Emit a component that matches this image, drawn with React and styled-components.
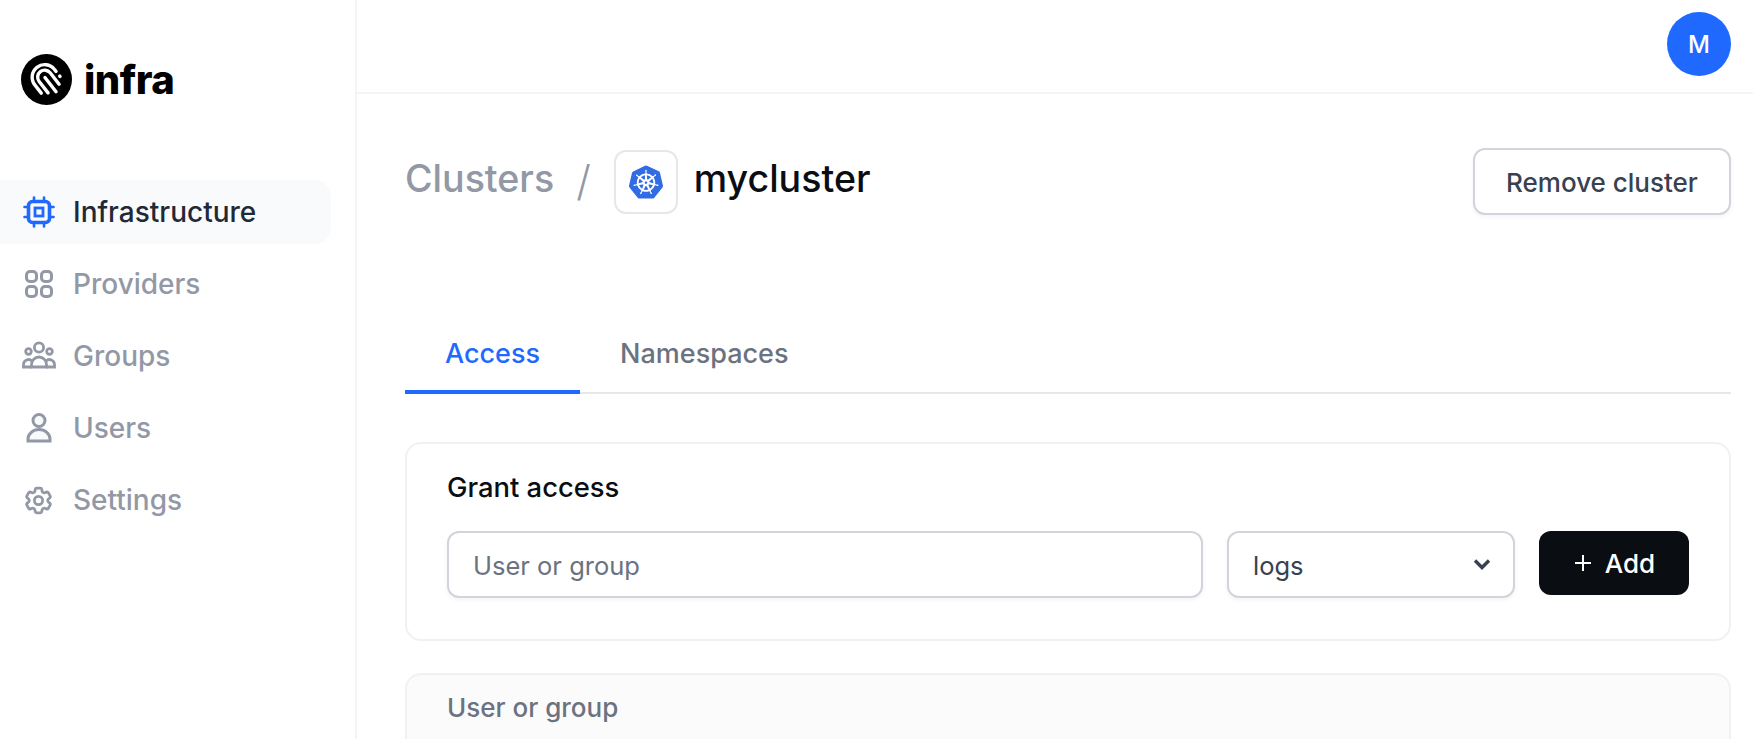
import styled, { createGlobalStyle } from 'styled-components'
import { HiOutlineCog6Tooth } from 'react-icons/hi2'
import { SiKubernetes } from 'react-icons/si'

const blue = '#1f69ff'
const ink = '#0a0e12'
const muted = '#9298a5'

const GlobalStyle = createGlobalStyle`
  html, body {
    margin: 0;
    height: 100%;
    background: #fff;
    font-family: Inter, 'Liberation Sans', sans-serif;
    overflow: hidden;
  }
  * { box-sizing: border-box; }
`

const Shell = styled.div`
  display: flex;
  height: 739px;
  overflow: hidden;
`

const Sidebar = styled.aside`
  flex: 0 0 357px;
  border-right: 2px solid #f3f4f6;
  padding: 54px 24px 0 0;
`

const Brand = styled.div`
  display: flex;
  align-items: center;
  gap: 12px;
  margin-left: 21px;
  height: 51px;
`

const Wordmark = styled.span`
  font-size: 40px;
  font-weight: 800;
  color: #000;
  letter-spacing: -0.5px;
  line-height: 1;
  margin-top: 1px;
`

const Menu = styled.nav`
  display: flex;
  flex-direction: column;
  gap: 8px;
  margin-top: 75px;
`

const MenuItem = styled.a`
  display: flex;
  align-items: center;
  gap: 18px;
  height: 64px;
  padding-left: 23px;
  border-radius: 0 16px 16px 0;
  font-size: 28px;
  font-weight: 450;
  color: ${p => (p.$active ? '#1f2937' : muted)};
  background: ${p => (p.$active ? '#f9fafb' : 'transparent')};
  svg {
    flex: none;
    color: ${p => (p.$active ? blue : muted)};
  }
`

const Main = styled.div`
  flex: 1;
  min-width: 0;
`

const TopBar = styled.header`
  display: flex;
  justify-content: flex-end;
  align-items: center;
  height: 94px;
  padding: 0 22px 4px 0;
  border-bottom: 2px solid #f3f4f6;
`

const Avatar = styled.div`
  width: 64px;
  height: 64px;
  border-radius: 50%;
  background: ${blue};
  color: #fff;
  display: flex;
  align-items: center;
  justify-content: center;
  font-size: 24px;
  font-weight: 450;
`

const Content = styled.main`
  padding: 54px 22px 0 48px;
`

const TitleRow = styled.div`
  display: flex;
  align-items: center;
  justify-content: space-between;
`

const Crumbs = styled.div`
  display: flex;
  align-items: center;
  font-size: 37.6px;
  font-weight: 450;
  line-height: 1;
`

const CrumbLink = styled.span`
  color: ${muted};
  margin-top: -5px;
`

const Slash = styled.span`
  color: ${muted};
  font-size: 42px;
  font-weight: 300;
  margin: -2px 23px 0 22px;
`

const ClusterBadge = styled.div`
  display: flex;
  align-items: center;
  justify-content: center;
  width: 64px;
  height: 64px;
  margin-right: 16px;
  border: 2px solid #e5e7eb;
  border-radius: 12px;
  color: #326ce5;
`

const ClusterName = styled.span`
  color: ${ink};
  margin-top: -5px;
`

const OutlineButton = styled.button`
  width: 258px;
  height: 67px;
  padding-top: 2px;
  border: 2px solid #d1d5db;
  border-radius: 12px;
  background: #fff;
  box-shadow: 0 2px 4px rgba(0, 0, 0, 0.05);
  color: #374151;
  font: 450 26px Inter, 'Liberation Sans', sans-serif;
`

const Tabs = styled.div`
  display: flex;
  margin-top: 100px;
  border-bottom: 2px solid #e5e7eb;
`

const Tab = styled.div`
  padding: 0 40px 19px;
  margin-bottom: -2px;
  height: 79px;
  display: flex;
  align-items: flex-end;
  font-size: 27px;
  font-weight: 450;
  line-height: 34px;
  color: ${p => (p.$active ? blue : '#6b7280')};
  border-bottom: 4px solid ${p => (p.$active ? blue : 'transparent')};
`

const Card = styled.section`
  margin-top: 48px;
  height: 199px;
  padding: 26px 40px 0;
  border: 2px solid #f0f1f4;
  border-radius: 16px;
`

const CardTitle = styled.h2`
  margin: 0;
  font-size: 27.4px;
  font-weight: 450;
  line-height: 34px;
  color: ${ink};
`

const GrantRow = styled.form`
  display: flex;
  align-items: flex-start;
  margin-top: 27px;
`

const TextInput = styled.input`
  flex: 0 0 756px;
  height: 67px;
  padding: 2px 24px 0;
  border: 2px solid #d1d5db;
  border-radius: 12px;
  box-shadow: 0 2px 4px rgba(0, 0, 0, 0.05);
  font: 400 25.5px Inter, 'Liberation Sans', sans-serif;
  color: #374151;
  &::placeholder {
    color: #6b7280;
    opacity: 1;
  }
`

const SelectWrap = styled.div`
  position: relative;
  flex: 0 0 288px;
  margin: 0 24px;
  color: #374151;
  svg {
    position: absolute;
    right: 23px;
    top: 23px;
    pointer-events: none;
  }
`

const RoleSelect = styled.select`
  appearance: none;
  width: 100%;
  height: 67px;
  padding: 2px 24px 0;
  border: 2px solid #d1d5db;
  border-radius: 12px;
  background: #fff;
  box-shadow: 0 2px 4px rgba(0, 0, 0, 0.05);
  font: 400 25.5px Inter, 'Liberation Sans', sans-serif;
  color: #374151;
`

const AddButton = styled.button`
  flex: 0 0 150px;
  height: 64px;
  display: flex;
  align-items: center;
  justify-content: center;
  gap: 12px;
  border: 0;
  border-radius: 12px;
  background: ${ink};
  color: #fff;
  font: 450 26px Inter, 'Liberation Sans', sans-serif;
`

const TableCard = styled.section`
  margin-top: 32px;
  height: 120px;
  padding: 17px 40px;
  border: 2px solid #f0f1f4;
  border-radius: 16px 16px 0 0;
  background: #fbfbfc;
  font-size: 26px;
  font-weight: 450;
  line-height: 32px;
  color: #6b7280;
`

const FingerprintLogo = () => (
  <svg width="51" height="51" viewBox="0 0 51 51">
    <circle cx="25.5" cy="25.5" r="25.5" fill="#000" />
    <g fill="none" stroke="#fff" strokeWidth="3.4" strokeLinecap="round" transform="rotate(-38 25.5 25.5)">
      <path d="M13 33V22.5a12.5 12.5 0 0 1 25 0V25" />
      <path d="M38 31v.5" />
      <path d="M18.5 37V22.5a7 7 0 0 1 14 0V37" />
      <path d="M25.5 41V23" />
    </g>
  </svg>
)

const CpuIcon = () => (
  <svg width="32" height="32" viewBox="0 0 32 32" fill="none" stroke="currentColor" strokeWidth="3.6" strokeLinecap="round">
    <rect x="5.5" y="5.5" width="21" height="21" rx="4" />
    <rect x="12" y="12" width="8" height="8" strokeWidth="2.8" />
    <path d="M11 1.5v2M21 1.5v2M11 28.5v2M21 28.5v2M1.5 11h2M1.5 21h2M28.5 11h2M28.5 21h2" strokeWidth="2.6" />
  </svg>
)

const GridIcon = () => (
  <svg width="32" height="32" viewBox="0 0 32 32" fill="none" stroke="currentColor" strokeWidth="3">
    <rect x="3.5" y="3.5" width="10" height="10" rx="3.5" />
    <rect x="18.5" y="3.5" width="10" height="10" rx="3.5" />
    <rect x="3.5" y="18.5" width="10" height="10" rx="3.5" />
    <rect x="18.5" y="18.5" width="10" height="10" rx="3.5" />
  </svg>
)

const GroupIcon = () => (
  <svg width="34" height="32" viewBox="0 0 34 32" fill="none" stroke="currentColor" strokeWidth="2.8" style={{ marginLeft: -1, marginRight: -1 }}>
    <circle cx="17" cy="7.5" r="4.6" />
    <circle cx="6.5" cy="11.5" r="2.8" />
    <circle cx="27.5" cy="11.5" r="2.8" />
    <path d="M9.5 27v-2.5a7.5 7.5 0 0 1 15 0V27z" />
    <path d="M9.5 27H1.5v-2.5a5 5 0 0 1 8.5-3.5M24.5 27h8v-2.5a5 5 0 0 0-8.5-3.5" />
  </svg>
)

const UserIcon = () => (
  <svg width="32" height="32" viewBox="0 0 32 32" fill="#f9fafb" stroke="currentColor" strokeWidth="3">
    <circle cx="16" cy="8.5" r="6" />
    <path d="M5 29v-2a11 9.5 0 0 1 22 0v2z" />
  </svg>
)

const ChevronIcon = () => (
  <svg width="20" height="20" viewBox="0 0 20 20" fill="none" stroke="currentColor" strokeWidth="3.4">
    <path d="M3 6.5l7 7 7-7" />
  </svg>
)

const PlusIcon = () => (
  <svg width="20" height="20" viewBox="0 0 20 20" stroke="currentColor" strokeWidth="2">
    <path d="M10 2v16M2 10h16" />
  </svg>
)

const menu = [
  { label: 'Infrastructure', icon: <CpuIcon />, active: true },
  { label: 'Providers', icon: <GridIcon /> },
  { label: 'Groups', icon: <GroupIcon /> },
  { label: 'Users', icon: <UserIcon /> },
  { label: 'Settings', icon: <HiOutlineCog6Tooth size={33} strokeWidth={2} style={{ marginLeft: -1 }} /> },
]

export default function App() {
  return (
    <>
      <GlobalStyle />
      <Shell>
        <Sidebar>
          <Brand>
            <FingerprintLogo />
            <Wordmark>infra</Wordmark>
          </Brand>
          <Menu>
            {menu.map(item => (
              <MenuItem key={item.label} $active={item.active}>
                {item.icon}
                {item.label}
              </MenuItem>
            ))}
          </Menu>
        </Sidebar>
        <Main>
          <TopBar>
            <Avatar>M</Avatar>
          </TopBar>
          <Content>
            <TitleRow>
              <Crumbs>
                <CrumbLink>Clusters</CrumbLink>
                <Slash>/</Slash>
                <ClusterBadge>
                  <SiKubernetes size={34} />
                </ClusterBadge>
                <ClusterName>mycluster</ClusterName>
              </Crumbs>
              <OutlineButton>Remove cluster</OutlineButton>
            </TitleRow>
            <Tabs>
              <Tab $active>Access</Tab>
              <Tab>Namespaces</Tab>
            </Tabs>
            <Card>
              <CardTitle>Grant access</CardTitle>
              <GrantRow>
                <TextInput placeholder="User or group" />
                <SelectWrap>
                  <RoleSelect defaultValue="logs">
                    <option value="logs">logs</option>
                  </RoleSelect>
                  <ChevronIcon />
                </SelectWrap>
                <AddButton type="button">
                  <PlusIcon />
                  Add
                </AddButton>
              </GrantRow>
            </Card>
            <TableCard>User or group</TableCard>
          </Content>
        </Main>
      </Shell>
    </>
  )
}
